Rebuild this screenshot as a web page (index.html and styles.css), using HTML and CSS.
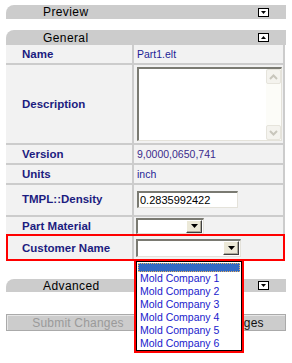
FILE: index.html
```html
<!DOCTYPE html>
<html>
<head>
<meta charset="utf-8">
<link rel="stylesheet" href="styles.css">
</head>
<body>
<div class="page">
  <div class="head">
    <span class="title">Preview</span>
    <svg class="toggle" viewBox="0 0 11 9" width="11" height="9"><rect x="0.5" y="0.5" width="10" height="8" fill="#fff" stroke="#000"/><path d="M3 3h5l-2.5 3z" fill="#000"/></svg>
  </div>

  <div class="general">
    <div class="head head-general">
      <span class="title">General</span>
      <svg class="toggle" viewBox="0 0 11 9" width="11" height="9"><rect x="0.5" y="0.5" width="10" height="8" fill="#fff" stroke="#000"/><path d="M3 6h5l-2.5 -3z" fill="#000"/></svg>
    </div>
    <div class="props">
      <div class="row r-name">
        <div class="lbl">Name</div>
        <div class="val">Part1.elt</div>
      </div>
      <div class="row r-desc">
        <div class="lbl">Description</div>
        <div class="val val-top">
          <div class="textarea">
            <div class="scroll">
              <div class="sbtn"><svg viewBox="0 0 9 6" width="9" height="6"><path d="M1 5l3.5-3.5L8 5" fill="none" stroke="#c8c6bc" stroke-width="2"/></svg></div>
              <div class="sbtn"><svg viewBox="0 0 9 6" width="9" height="6"><path d="M1 1l3.5 3.5L8 1" fill="none" stroke="#c8c6bc" stroke-width="2"/></svg></div>
            </div>
          </div>
        </div>
      </div>
      <div class="row r-ver">
        <div class="lbl">Version</div>
        <div class="val val-num">9,0000,0650,741</div>
      </div>
      <div class="row r-units">
        <div class="lbl">Units</div>
        <div class="val">inch</div>
      </div>
      <div class="row r-tmpl">
        <div class="lbl">TMPL::Density</div>
        <div class="val val-top">
          <div class="input">0.2835992422</div>
        </div>
      </div>
      <div class="row r-part">
        <div class="lbl">Part Material</div>
        <div class="val val-sel">
          <div class="select sel-part">
            <span class="sel-btn"><svg viewBox="0 0 7 4" width="7" height="4"><path d="M0 0h7l-3.5 4z" fill="#000"/></svg></span>
          </div>
        </div>
      </div>
      <div class="row r-cust">
        <div class="lbl">Customer Name</div>
        <div class="val val-sel">
          <div class="select sel-cust">
            <span class="sel-btn"><svg viewBox="0 0 7 4" width="7" height="4"><path d="M0 0h7l-3.5 4z" fill="#000"/></svg></span>
          </div>
          <div class="listbox">
            <div class="list-inner">
              <div class="opt opt-sel"></div>
              <div class="opt">Mold Company 1</div>
              <div class="opt">Mold Company 2</div>
              <div class="opt">Mold Company 3</div>
              <div class="opt">Mold Company 4</div>
              <div class="opt">Mold Company 5</div>
              <div class="opt">Mold Company 6</div>
            </div>
          </div>
        </div>
      </div>
    </div>
  </div>

  <div class="head head-adv">
    <span class="title">Advanced</span>
    <svg class="toggle" viewBox="0 0 11 9" width="11" height="9"><rect x="0.5" y="0.5" width="10" height="8" fill="#fff" stroke="#000"/><path d="M3 3h5l-2.5 3z" fill="#000"/></svg>
  </div>

  <div class="buttons">
    <button class="btn btn-dis">Submit Changes</button>
    <button class="btn">Cancel Changes</button>
  </div>
</div>
</body>
</html>
```
FILE: styles.css
```css
* { box-sizing: border-box; }

html, body { min-height: 363px; }

body {
  margin: 0;
  background: #fff;
  font-family: "Liberation Sans", Arial, sans-serif;
}

.page {
  padding: 5px 6px 40px;
  min-height: 363px;
}

.head {
  height: 14px;
  background: #cccccc;
  border-top-left-radius: 8px;
  display: flex;
  align-items: center;
  padding: 0 17px 0 37px;
  font-size: 12px;
  font-weight: normal;
  letter-spacing: 0.4px;
  color: #000;
}

.head .title { flex: 1; }

.toggle { display: block; }

.general { margin-top: 11px; }

.head-general { height: 15px; }

.props {
  display: flex;
  flex-direction: column;
  gap: 2px;
  background: #cccccc;
  margin-right: 1px;
  padding-right: 2px;
}

.row {
  display: grid;
  grid-template-columns: 126px 1fr;
  column-gap: 2px;
  position: relative;
}

.r-name { height: 18px; }
.r-desc { height: 78px; }
.r-ver { height: 18px; }
.r-units { height: 18px; }
.r-tmpl { height: 30px; }
.r-part { height: 17px; }
.r-cust { height: 23px; }

.r-cust::after {
  content: "";
  position: absolute;
  left: 0;
  right: -2px;
  top: -2px;
  bottom: -2px;
  border: 2px solid #ff0000;
  pointer-events: none;
}

.lbl {
  background: #f2f2f2;
  display: flex;
  align-items: center;
  padding-left: 16px;
  font-weight: bold;
  font-size: 11.5px;
  color: #1c1c80;
}

.r-tmpl .lbl { padding-bottom: 3px; }

.val {
  background: #f2f2f2;
  display: flex;
  align-items: center;
  padding-left: 3px;
  font-size: 10.5px;
  color: #1e1e96;
  position: relative;
}

.val-num { color: #3a2a8c; }

.val-top { align-items: flex-start; }

.textarea {
  margin-top: 2px;
  width: 145px;
  height: 74px;
  background: #fff;
  border-top: 2px solid #7a7a72;
  border-left: 2px solid #7a7a72;
  border-bottom: 1px solid #e4e2da;
  border-right: 1px solid #e4e2da;
  display: flex;
  justify-content: flex-end;
}

.scroll {
  width: 15px;
  background: #fcfcf8;
  display: flex;
  flex-direction: column;
  justify-content: space-between;
}

.sbtn {
  height: 15px;
  background: #f4f3ee;
  border: 1px solid #e6e4dc;
  border-radius: 2px;
  display: flex;
  align-items: center;
  justify-content: center;
}

.sbtn svg { display: block; }

.input {
  margin-top: 6px;
  width: 101px;
  height: 17px;
  background: #fff;
  border-top: 2px solid #7a7a72;
  border-left: 2px solid #7a7a72;
  border-bottom: 1px solid #e4e2da;
  border-right: 1px solid #e4e2da;
  font-size: 11px;
  color: #000;
  padding-left: 1px;
  line-height: 14px;
}

.val-sel { padding-left: 2px; }

.select {
  background: #fff;
  border-top: 2px solid #7a7a72;
  border-left: 2px solid #7a7a72;
  border-bottom: 1px solid #e4e2da;
  border-right: 1px solid #e4e2da;
  display: flex;
  justify-content: flex-end;
  align-items: center;
  padding-right: 1px;
}

.sel-part { width: 68px; height: 16px; }
.sel-cust { width: 105px; height: 18px; }

.sel-btn {
  width: 16px;
  height: 13px;
  background: #ece9d8;
  border-top: 1px solid #fff;
  border-left: 1px solid #fff;
  border-right: 1px solid #404040;
  border-bottom: 1px solid #404040;
  box-shadow: inset -1px -1px 0 #aca899;
  display: flex;
  align-items: center;
  justify-content: center;
}

.sel-cust .sel-btn { height: 14px; }

.sel-btn svg { display: block; }

.listbox {
  position: absolute;
  left: 0;
  top: 100%;
  border: 2px solid #ff0000;
  z-index: 2;
}

.list-inner {
  width: 106px;
  background: #fff;
  border: 1px solid #000;
  padding: 1px 0 0;
}

.opt {
  height: 13px;
  line-height: 13px;
  padding-left: 3px;
  font-size: 10.5px;
  color: #1a1acc;
  white-space: nowrap;
}

.opt-sel {
  height: 9px;
  background: #316ac5;
  border: 1px dotted #e8b060;
  margin: 0 1px;
}

.head-adv {
  margin-top: 20px;
  height: 13px;
}

.buttons {
  margin-top: 22px;
  display: grid;
  grid-template-columns: 144px 1fr;
}

.btn {
  height: 17px;
  background: #cccccc;
  border: 1px solid #aaaaaa;
  box-shadow: inset 1px 1px 0 #e6e6e6;
  font-family: "Liberation Sans", Arial, sans-serif;
  font-size: 12px;
  letter-spacing: 0.2px;
  color: #111;
  padding: 0;
}

.btn-dis { color: #9a9a9a; }
```
